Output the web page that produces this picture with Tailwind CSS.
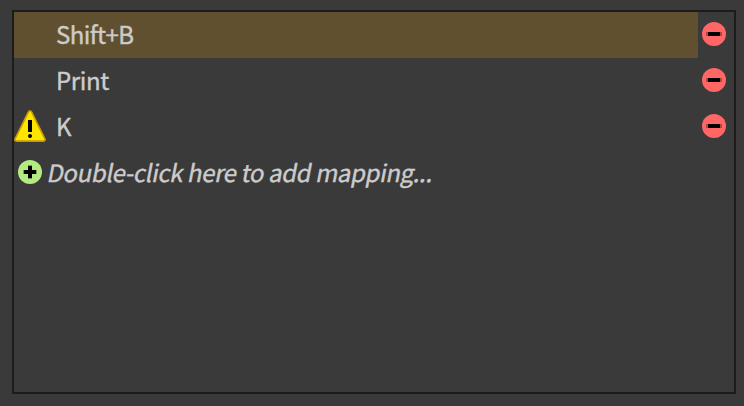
<!DOCTYPE html>
<html lang="en">
<head>
<meta charset="utf-8">
<title>Key mappings</title>
<script src="https://cdn.jsdelivr.net/npm/@tailwindcss/browser@4"></script>
</head>
<body class="h-screen overflow-hidden bg-[#3a3a3a] pt-[10px] pr-2 pb-3 pl-3 font-['Noto_Sans_CJK_JP','Noto_Sans_CJK_SC',sans-serif] text-[24px] leading-[44px] text-[#cccccc] [-webkit-text-stroke:0.4px_#cccccc]">
<svg class="hidden">
  <symbol id="remove" viewBox="0 0 24 24"><circle cx="12" cy="12" r="12" fill="#ff6666"/><path fill="#000" d="M6 10h12v4H6z"/><path fill="#000" opacity=".3" d="M4 10h2v4H4zM18 10h2v4h-2z"/></symbol>
</svg>
<main class="h-full border-2 border-[#1c1c1c]">
  <div class="flex h-[46px]">
    <div class="w-[684px] bg-[#60502f] pl-[42px]"><span class="tracking-[-0.55px]">Shift+B</span></div>
    <svg class="mt-[10px] ml-1 size-6"><use href="#remove"/></svg>
  </div>
  <div class="flex h-[46px]">
    <div class="w-[684px] pl-[42px]"><span class="tracking-[-0.4px]">Print</span></div>
    <svg class="mt-[10px] ml-1 size-6"><use href="#remove"/></svg>
  </div>
  <div class="flex h-[46px]">
    <div class="flex w-[684px]">
      <svg class="mt-[6px] mr-[10px] size-8" viewBox="0 0 32 32"><path d="M14.3 2.2Q16 -.6 17.7 2.2L30.8 28.6Q31.8 31.1 29.5 31.1H2.5Q.2 31.1 1.2 28.6Z" fill="#ffe600" stroke="#c79a00" stroke-width="1.6"/><path d="M14 10h4v12h-4z"/><circle cx="16" cy="26" r="2"/></svg>
      <span>K</span>
    </div>
    <svg class="mt-[10px] ml-1 size-6"><use href="#remove"/></svg>
  </div>
  <div class="flex h-[46px]">
    <svg class="mt-[10px] ml-1 size-6" viewBox="0 0 24 24"><circle cx="12" cy="12" r="12" fill="#b3eb80"/><path d="M10 6h4v4h4v4h-4v4h-4v-4H6v-4h4z"/><path opacity=".35" d="M10 5h4v1h-4zM10 18h4v1h-4zM5 10h1v4H5zM18 10h1v4h-1z"/></svg>
    <span class="ml-[6px] -skew-x-[11deg] whitespace-nowrap tracking-[-0.39px]">Double-click here to add mapping...</span>
  </div>
</main>
</body>
</html>
